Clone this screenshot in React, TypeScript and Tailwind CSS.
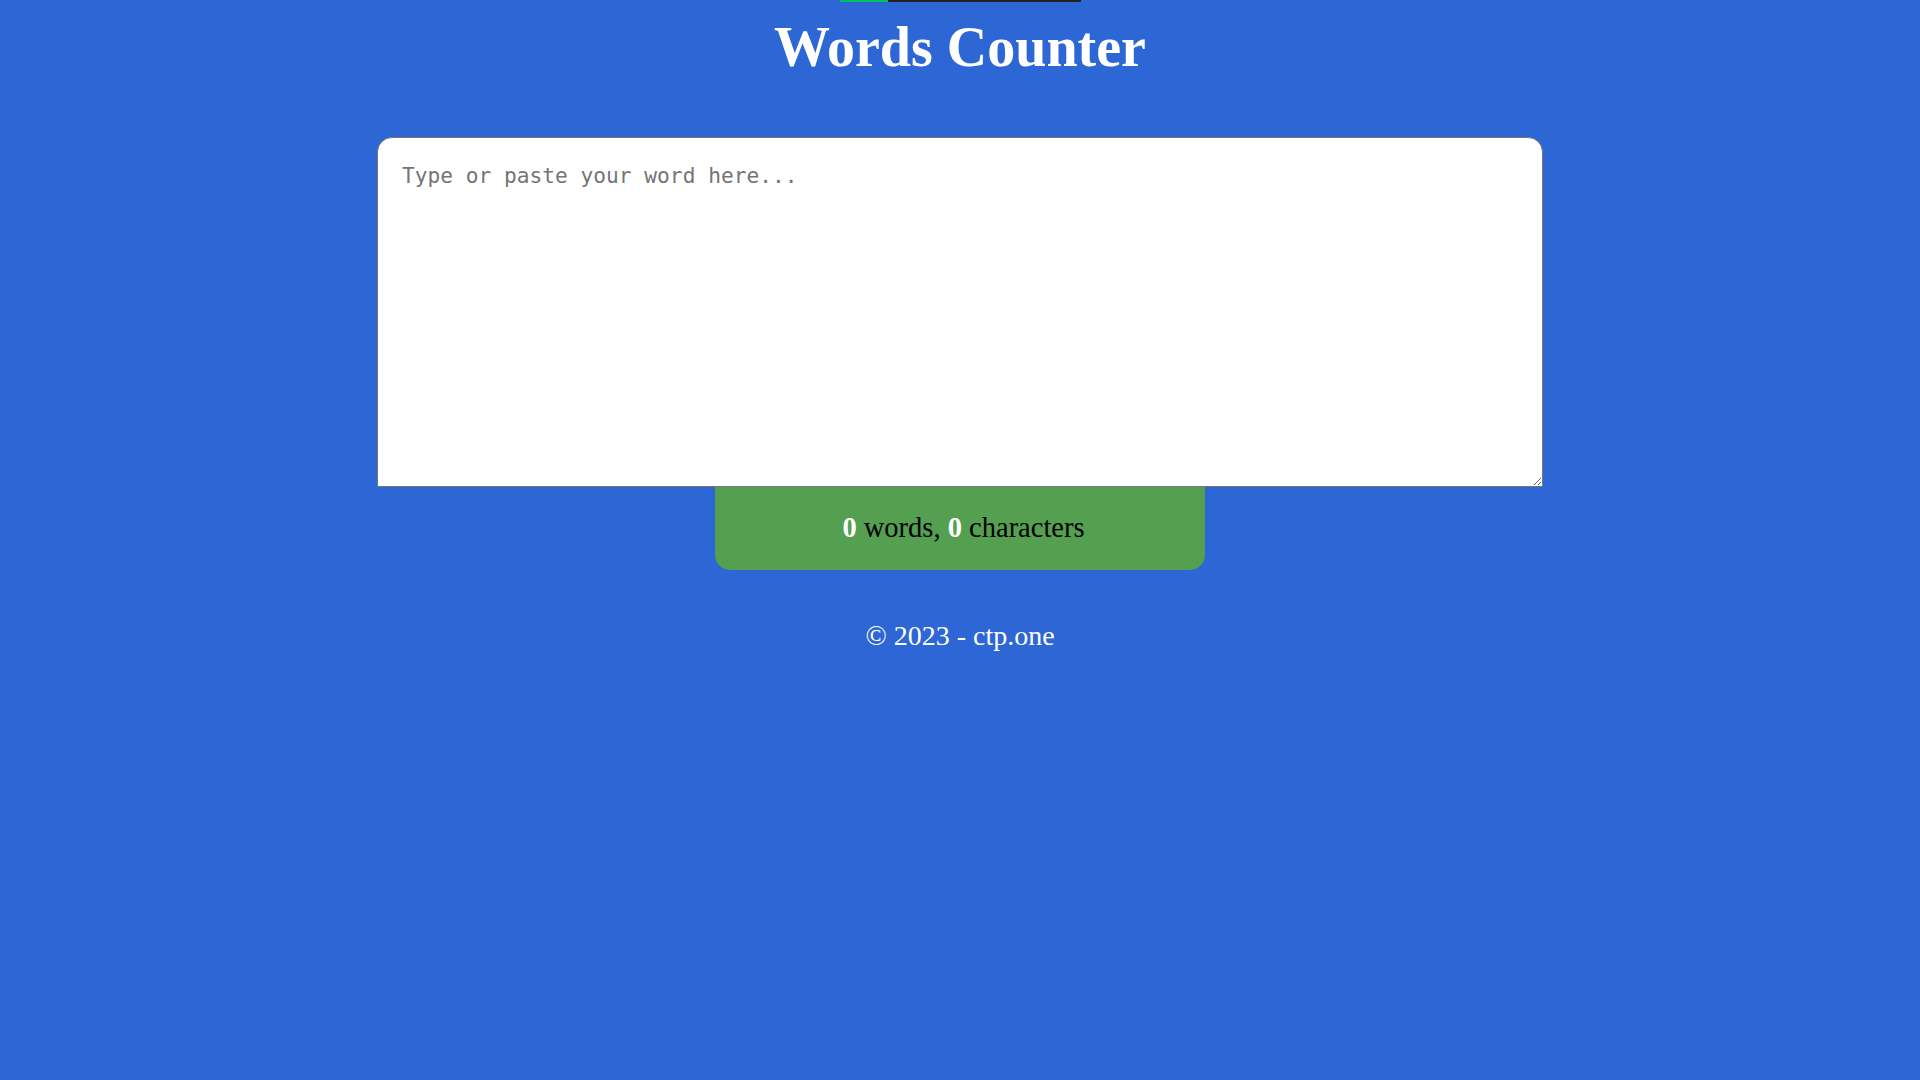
import { useState } from "react";

export default function App() {
  const [text, setText] = useState("");

  const words = text.trim() === "" ? 0 : text.trim().split(/\s+/).length;
  const chars = text.length;

  return (
    <div className="min-h-screen w-full bg-[#2d66d5] flex flex-col items-center font-['Liberation_Serif',serif]">
      {/* reading progress strip */}
      <div className="w-[241px] h-[2px] bg-[#222] flex">
        <div className="w-[48px] h-full bg-[#00c062]" />
      </div>

      <h1 className="mt-[13px] text-[56px] leading-[64px] font-bold text-white">Words Counter</h1>

      <div className="mt-[58px] w-[1166px] flex flex-col items-center">
        <textarea
          value={text}
          onChange={(e) => setText(e.target.value)}
          placeholder="Type or paste your word here..."
          className="w-full h-[350px] bg-white rounded-t-[15px] border border-[#767676] px-[24px] pt-[25px] pb-[15px] text-[21.2px] leading-[26px] font-['DejaVu_Sans_Mono',monospace] text-black placeholder:text-[#757575] outline-none resize-y"
        />
        <div className="w-[490px] h-[83px] bg-[#559f50] rounded-b-[15px] flex items-center justify-center pl-[7px] text-[28.5px] text-black">
          <span>
            <b className="text-white">{words}</b> words, <b className="text-white">{chars}</b> characters
          </span>
        </div>
      </div>

      <p className="mt-[45px] text-[28px] text-white">© 2023 - ctp.one</p>
    </div>
  );
}
